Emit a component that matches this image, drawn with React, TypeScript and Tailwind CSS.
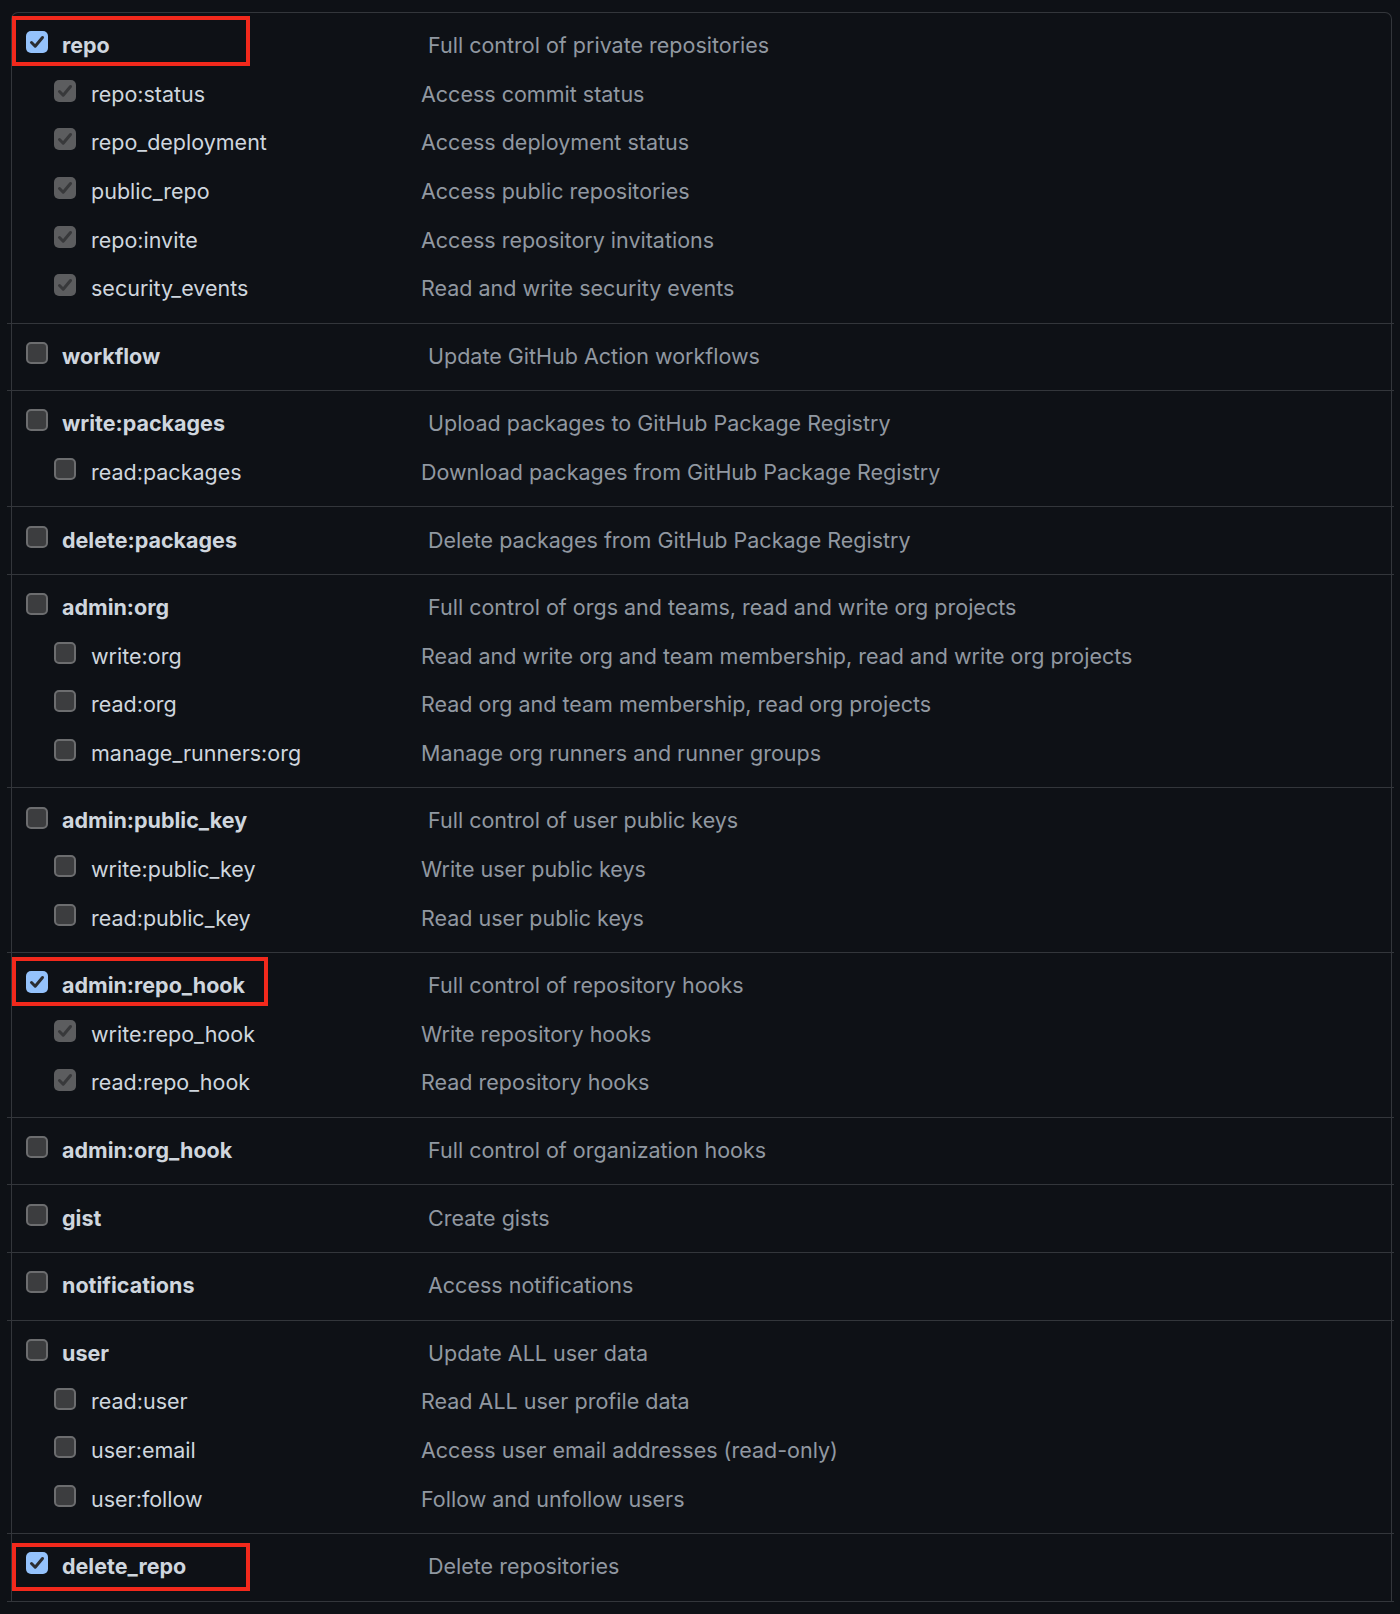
import type { ReactNode } from "react";

type Scope = {
  name: string;
  description: string;
  checked?: boolean;
  highlight?: { width: number; top: number; height: number };
  children?: { name: string; description: string }[];
};

const scopes: Scope[] = [
  {
    name: "repo",
    description: "Full control of private repositories",
    checked: true,
    highlight: { width: 238, top: -6, height: 50 },
    children: [
      { name: "repo:status", description: "Access commit status" },
      { name: "repo_deployment", description: "Access deployment status" },
      { name: "public_repo", description: "Access public repositories" },
      { name: "repo:invite", description: "Access repository invitations" },
      { name: "security_events", description: "Read and write security events" },
    ],
  },
  { name: "workflow", description: "Update GitHub Action workflows" },
  {
    name: "write:packages",
    description: "Upload packages to GitHub Package Registry",
    children: [{ name: "read:packages", description: "Download packages from GitHub Package Registry" }],
  },
  { name: "delete:packages", description: "Delete packages from GitHub Package Registry" },
  {
    name: "admin:org",
    description: "Full control of orgs and teams, read and write org projects",
    children: [
      { name: "write:org", description: "Read and write org and team membership, read and write org projects" },
      { name: "read:org", description: "Read org and team membership, read org projects" },
      { name: "manage_runners:org", description: "Manage org runners and runner groups" },
    ],
  },
  {
    name: "admin:public_key",
    description: "Full control of user public keys",
    children: [
      { name: "write:public_key", description: "Write user public keys" },
      { name: "read:public_key", description: "Read user public keys" },
    ],
  },
  {
    name: "admin:repo_hook",
    description: "Full control of repository hooks",
    checked: true,
    highlight: { width: 256, top: -5, height: 49 },
    children: [
      { name: "write:repo_hook", description: "Write repository hooks" },
      { name: "read:repo_hook", description: "Read repository hooks" },
    ],
  },
  { name: "admin:org_hook", description: "Full control of organization hooks" },
  { name: "gist", description: "Create gists" },
  { name: "notifications", description: "Access notifications" },
  {
    name: "user",
    description: "Update ALL user data",
    children: [
      { name: "read:user", description: "Read ALL user profile data" },
      { name: "user:email", description: "Access user email addresses (read-only)" },
      { name: "user:follow", description: "Follow and unfollow users" },
    ],
  },
  {
    name: "delete_repo",
    description: "Delete repositories",
    checked: true,
    highlight: { width: 238, top: 0, height: 48 },
  },
];

function CheckMark({ color }: { color: string }) {
  return (
    <svg viewBox="0 0 22 22" className="h-[22px] w-[22px]">
      <path d="M5.5 11.5 L9.2 15.2 L16.5 6.5" fill="none" stroke={color} strokeWidth="3" strokeLinecap="round" strokeLinejoin="round" />
    </svg>
  );
}

function Checkbox({ state }: { state: "checked" | "disabled" | "empty" }) {
  if (state === "checked") {
    return (
      <span className="mb-[8px] flex h-[22px] w-[22px] shrink-0 items-center justify-center rounded-[5px] bg-[#94c2fc]">
        <CheckMark color="#2b2d31" />
      </span>
    );
  }
  if (state === "disabled") {
    return (
      <span className="mb-[8px] flex h-[22px] w-[22px] shrink-0 items-center justify-center rounded-[5px] bg-[#5c5d5f]">
        <CheckMark color="#38393b" />
      </span>
    );
  }
  return <span className="mb-[8px] h-[22px] w-[22px] shrink-0 rounded-[5px] border-2 border-[#6c6d6f] bg-[#3c3d3f]" />;
}

function Row({ children }: { children: ReactNode }) {
  return <div className="relative flex h-[48.6px] items-center">{children}</div>;
}

export default function App() {
  return (
    <div className="min-h-screen bg-[#0e1116] pl-[11px] pr-[8px] pt-[12px]" style={{ fontFamily: "Inter, 'Noto Sans', sans-serif" }}>
      <div className="rounded-t-[7px] border-l border-r border-t border-[#33363b]">
        {scopes.map((scope) => (
          <div key={scope.name}>
            <div className="py-[9px]">
              <Row>
                {scope.highlight && (
                  <div
                    className="pointer-events-none absolute left-0 border-4 border-[#f2291c]"
                    style={{ width: scope.highlight.width, height: scope.highlight.height, top: scope.highlight.top }}
                  />
                )}
                <div className="flex w-[416px] items-center pl-[14px]">
                  <Checkbox state={scope.checked ? "checked" : "empty"} />
                  <span className="mb-[2px] ml-[14px] text-[21.5px] font-bold text-[#cfd6de]">{scope.name}</span>
                </div>
                <span className="mb-[2px] text-[21.5px] text-[#9198a1]">{scope.description}</span>
              </Row>
              {scope.children?.map((child) => (
                <Row key={child.name}>
                  <div className="flex w-[409px] items-center pl-[42px]">
                    <Checkbox state={scope.checked ? "disabled" : "empty"} />
                    <span className="mb-[2px] ml-[15px] text-[21.5px] text-[#cfd6de]">{child.name}</span>
                  </div>
                  <span className="mb-[2px] text-[21.5px] text-[#9198a1]">{child.description}</span>
                </Row>
              ))}
            </div>
            <div className="-ml-[5px] -mr-[3px] h-px bg-[#33363b]" />
          </div>
        ))}
      </div>
    </div>
  );
}
